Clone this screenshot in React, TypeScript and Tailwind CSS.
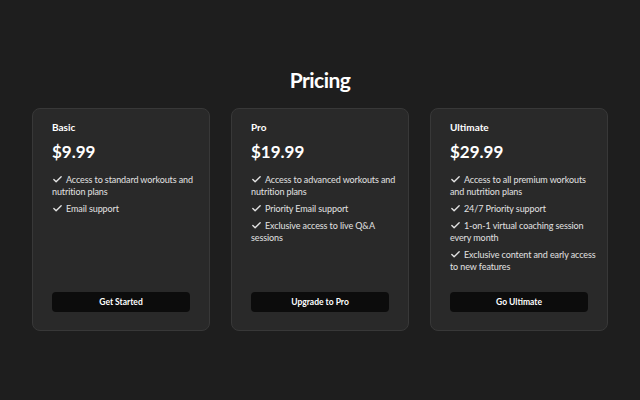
import { Check } from 'lucide-react'

const PLANS = [
  {
    name: 'Basic',
    price: '$9.99',
    features: ['Access to standard workouts and nutrition plans', 'Email support'],
    cta: 'Get Started',
  },
  {
    name: 'Pro',
    price: '$19.99',
    features: [
      'Access to advanced workouts and nutrition plans',
      'Priority Email support',
      'Exclusive access to live Q&A sessions',
    ],
    cta: 'Upgrade to Pro',
  },
  {
    name: 'Ultimate',
    price: '$29.99',
    features: [
      'Access to all premium workouts and nutrition plans',
      '24/7 Priority support',
      '1-on-1 virtual coaching session every month',
      'Exclusive content and early access to new features',
    ],
    cta: 'Go Ultimate',
  },
]

export default function App() {
  return (
    <div className="min-h-screen w-full bg-[#1e1e1e] text-white font-['Lato','Noto_Sans',sans-serif] pt-[67px]">
      <h1 className="text-center text-[21px] font-bold leading-[26px] tracking-tight">Pricing</h1>

      <div className="mt-[15px] flex justify-center gap-[21px]">
        {PLANS.map((plan) => (
          <div
            key={plan.name}
            className="w-[178px] h-[223px] flex flex-col rounded-[8px] border border-[#383838] bg-[#292929] pl-[19px] pr-[9px] pt-[11px] pb-[18px]"
          >
            <h3 className="text-[10px] font-bold leading-[14px]">{plan.name}</h3>
            <div className="mt-[7px] text-[17px] font-bold leading-[22px]">{plan.price}</div>

            <ul className="mt-[11px] flex flex-col gap-[5px]">
              {plan.features.map((f) => (
                <li key={f} className="text-[9px] leading-[12px] text-[#e2e2e2] tracking-[-0.1px]">
                  <Check className="inline-block w-[11px] h-[11px] mr-[3px] -mt-[2px]" strokeWidth={3} />
                  {f}
                </li>
              ))}
            </ul>

            <button className="mt-auto mr-[10px] h-[20px] rounded-[4px] bg-[#0c0c0c] text-[8.5px] font-bold text-white">
              {plan.cta}
            </button>
          </div>
        ))}
      </div>
    </div>
  )
}
